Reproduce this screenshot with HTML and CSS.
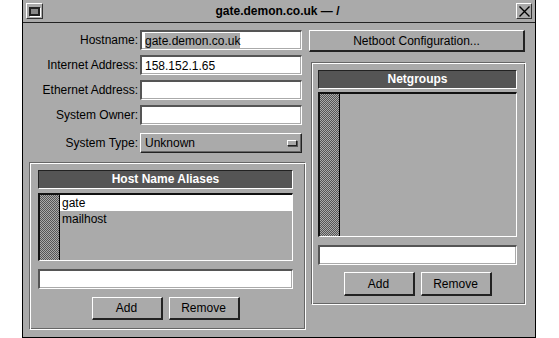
FILE: index.html
```html
<!DOCTYPE html>
<html lang="en">

<head>
    <meta charset="UTF-8">
    <title>gate.demon.co.uk — /</title>
    <link rel="stylesheet" href="styles.css">
</head>

<body>
    <div class="window">
        <div class="titlebar">
            <span class="menu-btn"><span class="menu-glyph"></span></span>
            <span class="title">gate.demon.co.uk — /</span>
            <span class="close-btn">
                <svg width="13" height="13" viewBox="0 0 13 13">
                    <path d="M1.5 1.5 L11.5 11.5 M11.5 1.5 L1.5 11.5" stroke="#000" stroke-width="1.4" fill="none" />
                </svg>
            </span>
        </div>

        <div class="content">
            <div class="left">
                <div class="form">
                    <div class="row">
                        <span class="lbl">Hostname:</span>
                        <span class="field"><span class="sel">gate.demon.co.uk</span></span>
                    </div>
                    <div class="row">
                        <span class="lbl">Internet Address:</span>
                        <span class="field">158.152.1.65</span>
                    </div>
                    <div class="row">
                        <span class="lbl">Ethernet Address:</span>
                        <span class="field"></span>
                    </div>
                    <div class="row">
                        <span class="lbl">System Owner:</span>
                        <span class="field"></span>
                    </div>
                    <div class="row type-row">
                        <span class="lbl">System Type:</span>
                        <button class="option">Unknown<span class="indicator"></span></button>
                    </div>
                </div>

                <div class="group aliases">
                    <div class="group-head">Host Name Aliases</div>
                    <div class="list">
                        <div class="scroll"></div>
                        <ul class="items">
                            <li class="selected">gate</li>
                            <li>mailhost</li>
                        </ul>
                    </div>
                    <div class="field entry"></div>
                    <div class="buttons">
                        <button class="btn">Add</button>
                        <button class="btn">Remove</button>
                    </div>
                </div>
            </div>

            <div class="right">
                <button class="btn wide">Netboot Configuration...</button>

                <div class="group netgroups">
                    <div class="group-head">Netgroups</div>
                    <div class="list">
                        <div class="scroll"></div>
                        <ul class="items"></ul>
                    </div>
                    <div class="field entry"></div>
                    <div class="buttons">
                        <button class="btn">Add</button>
                        <button class="btn">Remove</button>
                    </div>
                </div>
            </div>
        </div>
    </div>
</body>

</html>
```

FILE: styles.css
```css
* {
    box-sizing: border-box;
}

body {
    margin: 0;
    background-color: #fff;
    font-family: "Liberation Sans", Arial, sans-serif;
    font-size: 12px;
    color: #000;
}

.window {
    margin-left: 22px;
    width: 514px;
    height: 338px;
    background-color: #aaa;
    border-left: 1px solid #000;
    border-right: 1px solid #000;
    border-bottom: 1px solid #000;
}

/* title bar */

.titlebar {
    height: 23px;
    display: flex;
    align-items: center;
    padding: 0 2px;
    border-bottom: 1px solid #222;
}

.menu-btn {
    width: 17px;
    height: 16px;
    margin-left: 1px;
    display: flex;
    align-items: center;
    justify-content: center;
    border: 1px solid;
    border-color: #fff #333 #333 #fff;
}

.menu-glyph {
    width: 11px;
    height: 9px;
    border: 2px solid #222;
    background-color: #888;
    box-shadow: 1px 1px 0 #fff;
}

.title {
    flex: 1;
    text-align: center;
    font-weight: bold;
    padding-right: 4px;
}

.close-btn {
    width: 16px;
    height: 16px;
    margin-right: 1px;
    display: flex;
    align-items: center;
    justify-content: center;
    border: 1px solid;
    border-color: #fff #333 #333 #fff;
}

/* main area */

.content {
    display: flex;
    gap: 3px;
    padding: 7px 0 0 6px;
}

.left {
    width: 277px;
}

.right {
    width: 217px;
}

.form {
    padding-right: 4px;
}

.row {
    display: flex;
    align-items: center;
    height: 20px;
    margin-bottom: 5px;
}

.lbl {
    width: 111px;
    padding-right: 2px;
    text-align: right;
    white-space: nowrap;
}

.field {
    display: flex;
    align-items: center;
    height: 20px;
    padding-left: 3px;
    background-color: #fff;
    border: 2px solid;
    border-color: #555 #fff #fff #555;
    border-right-width: 1px;
    border-bottom-width: 1px;
    box-shadow: inset -1px -1px 0 #aaa;
    white-space: nowrap;
}

.row .field {
    width: 162px;
}

.sel {
    background-color: #aaa;
    padding: 1px 0;
}

.type-row {
    margin-top: 8px;
    margin-bottom: 0;
    height: 20px;
}

.option {
    width: 162px;
    height: 20px;
    display: flex;
    align-items: center;
    justify-content: space-between;
    padding: 0 4px;
    font: inherit;
    background-color: #aaa;
    border: 1px solid;
    border-color: #fff #222 #222 #fff;
    box-shadow: inset -1px -1px 0 #666;
}

.indicator {
    width: 10px;
    height: 6px;
    border: 1px solid;
    border-color: #fff #222 #222 #fff;
    box-shadow: 1px 1px 0 #555;
}

/* buttons */

.btn {
    font: inherit;
    color: #000;
    background-color: #aaa;
    border-style: solid;
    border-width: 1px 2px 2px 1px;
    border-color: #fff #222 #222 #fff;
    padding: 0;
}

.wide {
    display: block;
    width: 216px;
    height: 22px;
    margin-bottom: 10px;
}

/* group boxes */

.group {
    border: 1px solid;
    border-color: #666 #fff #fff #666;
    box-shadow: inset 1px 1px 0 #fff, inset -1px -1px 0 #666;
}

.aliases {
    margin-top: 9px;
    height: 168px;
    padding: 7px 12px 8px 8px;
}

.netgroups {
    margin-left: 2px;
    width: 215px;
    height: 243px;
    padding: 7px 8px 8px 6px;
}

.group-head {
    height: 19px;
    line-height: 17px;
    text-align: center;
    font-weight: bold;
    color: #fff;
    background-color: #555;
    border: 1px solid;
    border-color: #222 #fff #fff #222;
}

.list {
    display: flex;
    margin-top: 4px;
    border-style: solid;
    border-width: 2px 1px 1px 2px;
    border-color: #111 #fff #fff #111;
}

.aliases .list {
    height: 68px;
}

.netgroups .list {
    margin-top: 3px;
    height: 145px;
}

.scroll {
    width: 20px;
    background: repeating-conic-gradient(#555 0 25%, #aaa 0 50%) 0 0 / 2px 2px;
    border-right: 1px solid #000;
}

.items {
    flex: 1;
    list-style: none;
    margin: 0;
    padding: 0;
}

.items li {
    height: 16px;
    line-height: 16px;
    padding-left: 2px;
}

.items .selected {
    background-color: #fff;
}

.entry {
    margin-top: 8px;
}

.buttons {
    display: flex;
    justify-content: center;
    gap: 6px;
    margin-top: 8px;
}

.buttons .btn {
    width: 71px;
    height: 23px;
}

.netgroups .buttons {
    margin-top: 7px;
}

.netgroups .buttons .btn {
    height: 24px;
}
```
